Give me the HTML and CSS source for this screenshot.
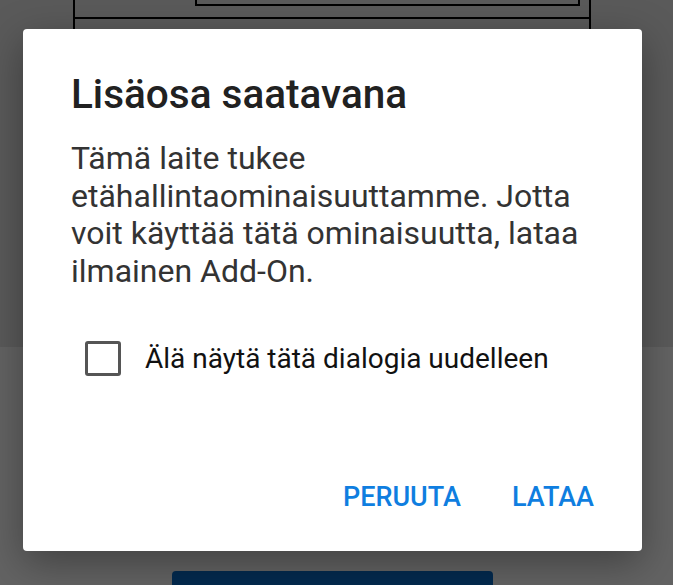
FILE: index.html
```html
<!DOCTYPE html>
<html lang="fi">
<head>
    <meta charset="UTF-8">
    <meta name="viewport" content="width=device-width, initial-scale=1.0">
    <title>Lisäosa saatavana</title>
    <link rel="stylesheet" href="styles.css">
</head>
<body>
    <div class="screen">
        <!-- taustasivu (himmennetty) -->
        <div class="page-top">
            <div class="panel">
                <div class="panel-inner"></div>
            </div>
        </div>
        <div class="page-bottom">
            <div class="page-button"></div>
        </div>

        <!-- dialogi -->
        <div class="dialog">
            <h1 class="dialog-title">Lisäosa saatavana</h1>
            <p class="dialog-text">Tämä laite tukee etähallintaominaisuuttamme. Jotta voit käyttää tätä ominaisuutta, lataa ilmainen Add-On.</p>

            <label class="check-row">
                <span class="check-box"></span>
                <span class="check-label">Älä näytä tätä dialogia uudelleen</span>
            </label>

            <div class="dialog-actions">
                <button class="action-button">PERUUTA</button>
                <button class="action-button">LATAA</button>
            </div>
        </div>
    </div>
</body>
</html>
```

FILE: styles.css
```css
* {
    margin: 0;
    padding: 0;
    box-sizing: border-box;
}

body {
    font-family: Roboto, 'Noto Sans', Arial, sans-serif;
    background: #636363;
    overflow: hidden;
}

.screen {
    width: 673px;
    height: 585px;
    position: relative;
    display: flex;
    flex-direction: column;
    overflow: hidden;
}

.page-top {
    height: 347px;
    flex-shrink: 0;
    background: #5a5a5a;
    display: flex;
    justify-content: center;
}

.panel {
    width: 518px;
    height: 60px;
    margin-left: -10px;
    border-left: 2px solid #000;
    border-right: 2px solid #000;
    display: flex;
    flex-direction: column;
    align-items: flex-end;
}

.panel::after {
    content: '';
    display: block;
    width: 100%;
    height: 12px;
    border-bottom: 2px solid #000;
}

.panel-inner {
    width: 385px;
    height: 6px;
    margin-right: 9px;
    border: 2px solid #000;
    border-top: none;
    margin-bottom: -1px;
}

.page-bottom {
    flex: 1;
    min-height: 0;
    background: #636363;
    display: flex;
    justify-content: center;
    padding-top: 224px;
}

.page-button {
    width: 321px;
    height: 40px;
    flex-shrink: 0;
    margin-left: -8px;
    background: #032a4f;
    border-radius: 4px;
}

.dialog {
    position: absolute;
    left: 23px;
    top: 29px;
    width: 619px;
    height: 522px;
    background: #fff;
    border-radius: 4px;
    box-shadow: 0 12px 40px rgba(0, 0, 0, 0.35);
    padding: 41px 48px 0 48px;
    display: flex;
    flex-direction: column;
}

.dialog-title {
    font-size: 40.5px;
    line-height: 48px;
    font-weight: 500;
    color: #212121;
}

.dialog-text {
    margin-top: 22px;
    font-size: 32px;
    line-height: 37.5px;
    color: #333;
}

.check-row {
    margin-top: 44px;
    height: 48px;
    display: flex;
    align-items: center;
    gap: 24px;
    padding-left: 14px;
}

.check-box {
    width: 36px;
    height: 35px;
    border: 3px solid #555;
    border-radius: 3px;
}

.check-label {
    font-size: 28px;
    color: #111;
}

.dialog-actions {
    margin-top: 97px;
    display: flex;
    justify-content: flex-end;
    gap: 51px;
}

.action-button {
    background: none;
    border: none;
    font-family: inherit;
    font-size: 27px;
    line-height: 36px;
    font-weight: 500;
    color: #0f7ee0;
}
```
